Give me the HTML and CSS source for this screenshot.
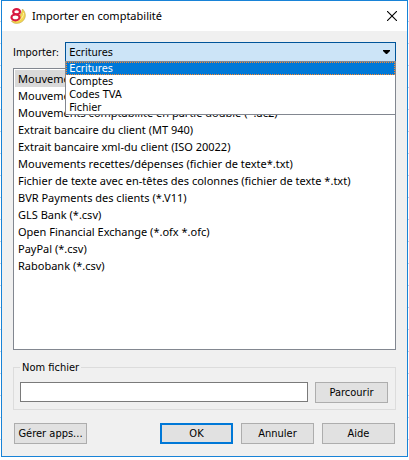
FILE: index.html
```html
<!DOCTYPE html>
<html lang="fr">
<head>
<meta charset="utf-8">
<title>Importer en comptabilité</title>
<link rel="stylesheet" href="styles.css">
</head>
<body>
<main class="dialog" role="dialog" aria-labelledby="dialog-title">
  <header class="titlebar">
    <svg class="logo" viewBox="0 0 16 16" aria-hidden="true">
      <path d="M12.5 1c5 5 3 12-3 14-4 1-7 0-8-2C7 12 11 8 12.5 1z" fill="#f3d64e" stroke="#c0a548" stroke-width=".6"/>
      <path d="M13.6 5c0 4-3 7-7 8" fill="none" stroke="#fff3a8" stroke-width="1"/>
      <ellipse cx="6.6" cy="3.8" rx="3.4" ry="2.6" fill="#fff" stroke="#d8173f" stroke-width="2.2"/>
      <ellipse cx="5.5" cy="9.4" rx="4" ry="2.9" fill="#fff" stroke="#d8173f" stroke-width="2.2"/>
    </svg>
    <h1 class="title" id="dialog-title">Importer en comptabilité</h1>
    <button class="close" type="button" aria-label="Fermer">
      <svg viewBox="0 0 10 10" aria-hidden="true"><path d="M0 0L10 10M10 0L0 10" stroke="#000" stroke-width="1.1"/></svg>
    </button>
  </header>
  <form class="content">
    <div class="type-row">
      <label for="type">Importer:</label>
      <div class="combo">
        <select id="type">
          <option>Ecritures</option>
          <option>Comptes</option>
          <option>Codes TVA</option>
          <option>Fichier</option>
        </select>
        <svg class="arrow" viewBox="0 0 7 4" aria-hidden="true"><path d="M0 0h7v1L4 4H3L0 1z"/></svg>
        <ul class="popup" role="listbox" aria-label="Importer">
          <li class="active" role="option" aria-selected="true">Ecritures</li>
          <li role="option">Comptes</li>
          <li role="option">Codes TVA</li>
          <li role="option">Fichier</li>
        </ul>
      </div>
    </div>
    <ul class="formats" role="listbox" aria-label="Format">
      <li class="current" role="option" aria-selected="true">Mouvements</li>
      <li role="option">Mouvements</li>
      <li role="option">Mouvements comptabilité en partie double (*.ac2)</li>
      <li role="option">Extrait bancaire du client (MT 940)</li>
      <li role="option">Extrait bancaire xml-du client (ISO 20022)</li>
      <li role="option">Mouvements recettes/dépenses (fichier de texte*.txt)</li>
      <li role="option">Fichier de texte avec en-têtes des colonnes (fichier de texte *.txt)</li>
      <li role="option">BVR Payments des clients (*.V11)</li>
      <li role="option">GLS Bank (*.csv)</li>
      <li role="option">Open Financial Exchange (*.ofx *.ofc)</li>
      <li role="option">PayPal (*.csv)</li>
      <li role="option">Rabobank (*.csv)</li>
    </ul>
    <fieldset class="file">
      <legend><label for="filename">Nom fichier</label></legend>
      <div class="file-row">
        <input id="filename" type="text">
        <button class="button" type="button">Parcourir</button>
      </div>
    </fieldset>
    <footer class="actions">
      <button class="button apps" type="button">Gérer apps...</button>
      <button class="button primary" type="submit">OK</button>
      <button class="button" type="button">Annuler</button>
      <button class="button" type="button">Aide</button>
    </footer>
  </form>
</main>
</body>
</html>
```
FILE: styles.css
```css
* { box-sizing: border-box; }

body {
  margin: 0;
  min-height: 100vh;
  padding: 0 1px 3px;
  display: flex;
  background: repeating-linear-gradient(#fff 0 21px, #c8d4e4 21px 22px);
  font: 11px/13px "DejaVu Sans Condensed", "DejaVu Sans", sans-serif;
  color: #000;
}

.dialog {
  flex: 1;
  min-width: 0;
  display: flex;
  flex-direction: column;
  border: 1px solid #1883d7;
  background: #f0f0f0;
  box-shadow: 0 3px #fff;
}

.titlebar {
  display: flex;
  align-items: center;
  height: 30px;
  padding: 0 10px 0 8px;
  background: #fff;
}

.logo { width: 16px; height: 16px; }

.title {
  flex: 1;
  margin: 0 0 0 6px;
  font: 11px/16px "Noto Sans", sans-serif;
}

.close {
  width: 10px;
  height: 10px;
  padding: 0;
  border: 0;
  background: none;
}

.close svg { display: block; }

.content {
  flex: 1;
  display: flex;
  flex-direction: column;
  padding: 11px 11px 12px;
}

.type-row {
  display: flex;
  align-items: center;
  gap: 6px;
}

.combo { position: relative; flex: 1; }

.combo select {
  display: block;
  appearance: none;
  width: 100%;
  height: 20px;
  padding: 0 3px;
  border: 1px solid #005499;
  border-radius: 0;
  background: #cce4f7;
  color: #000;
  font: inherit;
}

.arrow {
  position: absolute;
  top: 8px;
  right: 6px;
  width: 7px;
  height: 4px;
}

.popup, .formats {
  margin: 0;
  padding: 0;
  list-style: none;
  border: 1px solid #828790;
  background: #fff;
  white-space: nowrap;
}

.popup {
  position: absolute;
  top: 19px;
  left: 0;
  right: 0;
  z-index: 1;
}

.popup li {
  padding: 1px 3px 0;
  line-height: 12px;
}

.popup .active {
  background: #0078d7;
  color: #fff;
  outline: 1px dotted #ff8728;
  outline-offset: -1px;
}

.formats {
  flex: 1;
  margin-top: 6px;
  padding: 1px;
  font: 11px/17px "Noto Sans", sans-serif;
  overflow: hidden;
}

.formats li { padding: 0 3px; }

.formats .current { background: #d9d9d9; }

.file {
  min-width: 0;
  margin: 11px 0 0;
  padding: 0 7px 6px 6px;
  border: 1px solid #dcdcdc;
}

.file legend { padding: 0 2px; }

.file-row {
  display: flex;
  gap: 7px;
  padding-top: 8px;
}

.file input {
  flex: 1;
  min-width: 0;
  height: 20px;
  padding: 0 3px;
  border: 1px solid #7a7a7a;
  font: inherit;
}

.button {
  width: 73px;
  height: 21px;
  padding: 0;
  border: 1px solid #adadad;
  background: #e1e1e1;
  color: #000;
  font: inherit;
}

.primary { border: 2px solid #0078d7; }

.actions {
  display: flex;
  gap: 8px;
  padding: 0 1px;
  margin-top: 13px;
}

.apps { margin-right: auto; }
```
